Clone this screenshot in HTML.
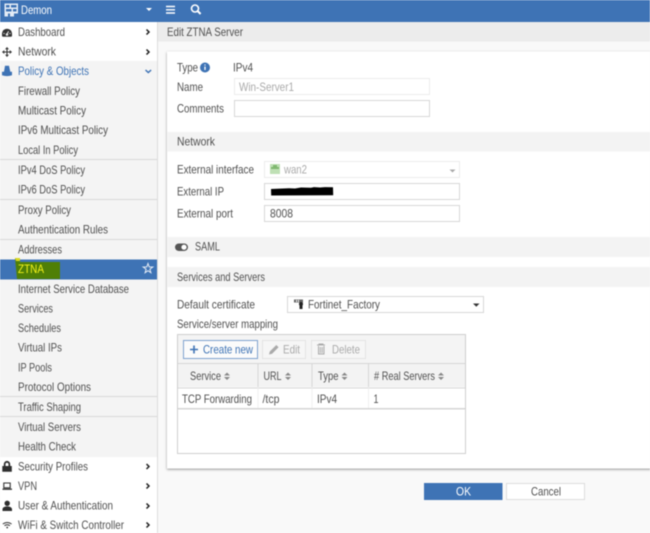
<!DOCTYPE html>
<html><head><meta charset="utf-8"><style>
html,body{margin:0;padding:0;width:650px;height:533px;overflow:hidden;background:#f9f9f9}
svg{display:block;filter:blur(.4px)}
text{font-family:"Liberation Sans",sans-serif;font-size:11.600px;fill:#505050}
</style></head><body>
<svg width="650" height="533" viewBox="0 0 650 533" xmlns="http://www.w3.org/2000/svg">
<defs><filter id="s" x="-5%" y="-5%" width="110%" height="110%"><feDropShadow dx="0" dy="1" stdDeviation="1.200" flood-color="#000" flood-opacity=".4"/></filter></defs>
<rect width="650" height="533" fill="#f9f9f9"/>
<!-- header -->
<rect width="650" height="22" fill="#3e73b5"/>
<path d="M4.500 3.500h13.500v10h-4v3h-4v-3h-2v3h-3.500zM6 5v2.500h3.500V5zM11 5v2.500h5.500V5zM6 9v2.500h5.500V9zM13 9v2.500h3.500V9z" fill="#e4ecf6" fill-rule="evenodd"/>
<text x="21" y="13.800" textLength="31" lengthAdjust="spacingAndGlyphs" style="fill:#fff;font-size:12px">Demon</text>
<path d="M146 8h6l-3 3z" fill="#fff"/>
<path d="M166 6.500h9M166 9.800h9M166 13h9" stroke="#fff" stroke-width="1.400" fill="none"/>
<circle cx="195" cy="8.500" r="3.500" fill="none" stroke="#fff" stroke-width="1.600"/><path d="M197.600 11l3 3" stroke="#fff" stroke-width="2"/>
<!-- sidebar -->
<rect y="22" width="157" height="511" fill="#fff"/>
<rect y="61" width="157" height="396" fill="#f4f4f4"/>
<rect x="157" y="22" width="1" height="511" fill="#dcdcdc"/>
<g fill="#d8d8d8"><rect y="159" width="157" height="1"/><rect y="199" width="157" height="1"/><rect y="239" width="157" height="1"/><rect y="396" width="157" height="1"/><rect y="416" width="157" height="1"/></g>
<rect y="259.500" width="157" height="20" fill="#3e73b5"/>
<path d="M15 258h5v4h40v17H17z" fill="#4f7f06"/>
<path d="M15 258h5v3h-4z" fill="#d8d820"/>
<path d="M148 263.500l1.200 3.400 3.600.1-2.900 2.200 1 3.500-2.900-2-2.900 2 1-3.500-2.900-2.200 3.600-.1z" fill="none" stroke="#e8eef7" stroke-width="1"/>
<g>
<text x="18" y="36" textLength="47" lengthAdjust="spacingAndGlyphs">Dashboard</text>
<text x="18" y="55.500" textLength="38" lengthAdjust="spacingAndGlyphs">Network</text>
<text x="18" y="75" textLength="71" lengthAdjust="spacingAndGlyphs" style="fill:#3e73b5">Policy &amp; Objects</text>
<text x="18" y="95" textLength="62" lengthAdjust="spacingAndGlyphs">Firewall Policy</text>
<text x="18" y="114.500" textLength="68" lengthAdjust="spacingAndGlyphs">Multicast Policy</text>
<text x="18" y="134" textLength="90" lengthAdjust="spacingAndGlyphs">IPv6 Multicast Policy</text>
<text x="18" y="154" textLength="60" lengthAdjust="spacingAndGlyphs">Local In Policy</text>
<text x="18" y="174" textLength="67" lengthAdjust="spacingAndGlyphs">IPv4 DoS Policy</text>
<text x="18" y="193.500" textLength="67" lengthAdjust="spacingAndGlyphs">IPv6 DoS Policy</text>
<text x="18" y="214" textLength="53" lengthAdjust="spacingAndGlyphs">Proxy Policy</text>
<text x="18" y="233.500" textLength="90" lengthAdjust="spacingAndGlyphs">Authentication Rules</text>
<text x="18" y="253.500" textLength="44" lengthAdjust="spacingAndGlyphs">Addresses</text>
<text x="18" y="273" textLength="26" lengthAdjust="spacingAndGlyphs" style="fill:#f4f21a">ZTNA</text>
<text x="18" y="293" textLength="111" lengthAdjust="spacingAndGlyphs">Internet Service Database</text>
<text x="18" y="312.500" textLength="35" lengthAdjust="spacingAndGlyphs">Services</text>
<text x="18" y="332" textLength="43" lengthAdjust="spacingAndGlyphs">Schedules</text>
<text x="18" y="351.500" textLength="44" lengthAdjust="spacingAndGlyphs">Virtual IPs</text>
<text x="18" y="371.500" textLength="34" lengthAdjust="spacingAndGlyphs">IP Pools</text>
<text x="18" y="391" textLength="73" lengthAdjust="spacingAndGlyphs">Protocol Options</text>
<text x="18" y="411" textLength="63" lengthAdjust="spacingAndGlyphs">Traffic Shaping</text>
<text x="18" y="431" textLength="63" lengthAdjust="spacingAndGlyphs">Virtual Servers</text>
<text x="18" y="450.500" textLength="58" lengthAdjust="spacingAndGlyphs">Health Check</text>
<text x="18" y="470.500" textLength="70" lengthAdjust="spacingAndGlyphs">Security Profiles</text>
<text x="18" y="490" textLength="19" lengthAdjust="spacingAndGlyphs">VPN</text>
<text x="18" y="509.500" textLength="95" lengthAdjust="spacingAndGlyphs">User &amp; Authentication</text>
<text x="18" y="529" textLength="106" lengthAdjust="spacingAndGlyphs">WiFi &amp; Switch Controller</text>
</g>
<!-- sidebar icons -->
<path d="M2 36.300v-2.800a5 4.800 0 0 1 10 0v2.800l-1 .5H3z" fill="#333"/>
<path d="M7 34l1.600-2.800" stroke="#eee" stroke-width="1"/><circle cx="7" cy="34.500" r="1.300" fill="#eee"/><circle cx="4" cy="33.500" r=".6" fill="#eee"/><circle cx="10" cy="33.500" r=".6" fill="#eee"/>
<path d="M7 48v8M3 52h8" stroke="#333" stroke-width="1.100"/>
<path d="M7 47l2 2.300H5zM7 57l2-2.300H5zM2 52l2.300-2v4zM12 52l-2.300-2v4z" fill="#333"/>
<path d="M5 65.700h4l1.300 6h1.700v3.500q-5 1.800-10 0v-3.500h2z" fill="#3e73b5"/>
<path d="M3.800 466v-1.800a3.200 3.300 0 0 1 6.400 0V466h1.600v5.800H2.300V466zM5.500 466h3v-1.800a1.500 1.500 0 0 0-3 0z" fill="#2e2e2e" fill-rule="evenodd"/>
<path d="M3.800 483h6.400v4.800H3.800z" fill="none" stroke="#333" stroke-width="1.100"/><path d="M2.500 489.200h9.500" stroke="#333" stroke-width="1.300"/>
<circle cx="7.200" cy="503.300" r="2.700" fill="#2e2e2e"/><path d="M2.500 511v-2.300q1-2.300 4.700-2.300t4.800 2.300v2.300z" fill="#2e2e2e"/>
<path d="M2.800 524q4.400-3 8.800 0M4.500 525.700q2.700-2 5.400 0" fill="none" stroke="#333" stroke-width="1"/><circle cx="7.200" cy="527.500" r=".9" fill="#333"/>
<g fill="none" stroke="#222" stroke-width="1.500"><path d="M146.500 29.500l2.500 2.500-2.500 2.500M146.500 49.500l2.500 2.500-2.500 2.500M146.500 464l2.500 2.500-2.500 2.500M146.500 483.500l2.500 2.500-2.500 2.500M146.500 503.500l2.500 2.500-2.500 2.500M146.500 522.500l2.500 2.500-2.500 2.500"/><path d="M145.500 70l2.800 2.500 2.800-2.500" stroke="#3e73b5"/></g>
<!-- title bar -->
<rect x="158" y="22" width="492" height="19.500" fill="#ececec"/>
<text x="167" y="36" textLength="76" lengthAdjust="spacingAndGlyphs">Edit ZTNA Server</text>
<!-- panel -->
<rect x="167" y="51.500" width="490" height="417" fill="#fff" filter="url(#s)"/>
<rect x="167.500" y="132" width="483" height="19.500" fill="#f3f3f3"/>
<rect x="167.500" y="237" width="483" height="20" fill="#f3f3f3"/>
<rect x="167.500" y="267" width="483" height="20" fill="#f3f3f3"/>
<text x="177" y="71.500" textLength="21" lengthAdjust="spacingAndGlyphs">Type</text>
<circle cx="205" cy="67.500" r="5" fill="#3e73b5"/><path d="M205 64.500v1M205 66.500v3.500" stroke="#fff" stroke-width="1.300"/>
<text x="233" y="71.500" textLength="20" lengthAdjust="spacingAndGlyphs">IPv4</text>
<text x="177" y="91" textLength="26" lengthAdjust="spacingAndGlyphs">Name</text>
<rect x="234.500" y="78.500" width="195" height="16" fill="#fff" stroke="#ececec"/>
<text x="239" y="91" textLength="55" lengthAdjust="spacingAndGlyphs" style="fill:#aaa">Win-Server1</text>
<text x="177" y="112.500" textLength="47" lengthAdjust="spacingAndGlyphs">Comments</text>
<rect x="234.500" y="100.500" width="195" height="16" fill="#fff" stroke="#d8d8d8"/>
<text x="177" y="145.500" textLength="38" lengthAdjust="spacingAndGlyphs">Network</text>
<text x="177" y="173.500" textLength="77" lengthAdjust="spacingAndGlyphs">External interface</text>
<rect x="264.500" y="161.500" width="195" height="16" fill="#fff" stroke="#ececec"/>
<rect x="270" y="164" width="10" height="10" fill="#bfe0b5"/><path d="M271 167h8v2h-8zM273 165h4v2h-4z" fill="#7fb86f"/>
<text x="284" y="173.500" textLength="23" lengthAdjust="spacingAndGlyphs" style="fill:#aaa">wan2</text>
<path d="M449.500 169.500h6l-3 3z" fill="#aaa"/>
<text x="177" y="195.500" textLength="47" lengthAdjust="spacingAndGlyphs">External IP</text>
<rect x="264.500" y="183.500" width="195" height="16" fill="#fff" stroke="#d8d8d8"/>
<path d="M271 189l18-.8 6 .3 6-1 10 .3 3-.7 6 .4 5-.4 8 .1.200 8-62 .3z" fill="#000"/>
<text x="177" y="217.500" textLength="56" lengthAdjust="spacingAndGlyphs">External port</text>
<rect x="264.500" y="205.500" width="195" height="16" fill="#fff" stroke="#d8d8d8"/>
<text x="270" y="217.500" textLength="23" lengthAdjust="spacingAndGlyphs">8008</text>
<rect x="175" y="243.500" width="13" height="7.500" rx="3.700" fill="#555"/><circle cx="184" cy="247.200" r="2.600" fill="#fff"/>
<text x="195" y="250.500" textLength="25" lengthAdjust="spacingAndGlyphs">SAML</text>
<text x="177" y="281" textLength="88" lengthAdjust="spacingAndGlyphs">Services and Servers</text>
<text x="177" y="308.500" textLength="78" lengthAdjust="spacingAndGlyphs">Default certificate</text>
<rect x="287.500" y="296.500" width="196" height="16" fill="#fff" stroke="#d8d8d8"/>
<path d="M294 299.500h9v3h-9z" fill="#666"/><path d="M296 300h1v2h-1zM298 300h1v2h-1z" fill="#fff"/><circle cx="301" cy="304" r="2" fill="#222"/><path d="M299.500 305h3v4h-3z" fill="#222"/>
<text x="308" y="308.500" textLength="72" lengthAdjust="spacingAndGlyphs">Fortinet_Factory</text>
<path d="M473 303.500h6.500l-3.200 3.200z" fill="#333"/>
<text x="177" y="328" textLength="101" lengthAdjust="spacingAndGlyphs">Service/server mapping</text>
<!-- table -->
<rect x="177.500" y="334.500" width="288" height="119" fill="#fff" stroke="#cfcfcf"/>
<rect x="178" y="335" width="287" height="28" fill="#f4f4f4"/>
<rect x="183.500" y="340.500" width="74" height="18" fill="#fbfbfb" stroke="#7fa2cf"/>
<path d="M190 349.500h8M194 345.500v8" stroke="#3e73b5" stroke-width="1.600"/>
<text x="203" y="353.500" textLength="50" lengthAdjust="spacingAndGlyphs" style="fill:#3e73b5">Create new</text>
<rect x="262.500" y="340.500" width="43" height="18" fill="#f6f6f6" stroke="#e4e4e4"/>
<path d="M269 354.500l.8-3 6.500-6.500 2.300 2.300-6.500 6.500z" fill="#aaa"/>
<text x="283" y="353.500" textLength="17" lengthAdjust="spacingAndGlyphs" style="fill:#aaa">Edit</text>
<rect x="311.500" y="340.500" width="54" height="18" fill="#f6f6f6" stroke="#e4e4e4"/>
<path d="M317 345h8M319 345v-1h4v1M318.500 346v8h5.500v-8M320.300 347v6M322.200 347v6" fill="none" stroke="#aaa" stroke-width="1"/>
<text x="332" y="353.500" textLength="28" lengthAdjust="spacingAndGlyphs" style="fill:#aaa">Delete</text>
<rect x="178" y="364" width="287" height="23" fill="#f3f3f3"/>
<g fill="#d6d6d6"><rect x="178" y="363" width="287" height="1"/><rect x="178" y="387.500" width="287" height="1"/><rect x="178" y="408" width="287" height="1.500"/><rect x="257.500" y="364" width="1" height="23"/><rect x="311.500" y="364" width="1" height="23"/><rect x="368" y="364" width="1" height="23"/></g>
<g fill="#f0f0f0"><rect x="257.500" y="388" width="1" height="20"/><rect x="311.500" y="388" width="1" height="20"/><rect x="368" y="388" width="1" height="20"/></g>
<text x="190" y="380" textLength="31" lengthAdjust="spacingAndGlyphs">Service</text>
<text x="263.500" y="380" textLength="18" lengthAdjust="spacingAndGlyphs">URL</text>
<text x="318" y="380" textLength="20.500" lengthAdjust="spacingAndGlyphs">Type</text>
<text x="374" y="380" textLength="61" lengthAdjust="spacingAndGlyphs"># Real Servers</text>
<g fill="#888"><path d="M224 375.500l3-3 3 3zM224 377l3 3 3-3zM285 375.500l3-3 3 3zM285 377l3 3 3-3zM341.500 375.500l3-3 3 3zM341.500 377l3 3 3-3zM438 375.500l3-3 3 3zM438 377l3 3 3-3z"/></g>
<text x="182" y="403" textLength="70" lengthAdjust="spacingAndGlyphs">TCP Forwarding</text>
<text x="262.500" y="403" textLength="17" lengthAdjust="spacingAndGlyphs">/tcp</text>
<text x="317" y="403" textLength="20" lengthAdjust="spacingAndGlyphs">IPv4</text>
<text x="373.500" y="403" textLength="5" lengthAdjust="spacingAndGlyphs">1</text>
<!-- buttons -->
<rect x="424" y="483" width="78.500" height="17" fill="#3e73b5"/>
<text x="456" y="495.500" textLength="15" lengthAdjust="spacingAndGlyphs" style="fill:#fff">OK</text>
<rect x="506.500" y="483.500" width="78" height="16" fill="#fff" stroke="#dcdcdc"/>
<text x="531" y="495.500" textLength="30" lengthAdjust="spacingAndGlyphs">Cancel</text>
</svg>
</body></html>
